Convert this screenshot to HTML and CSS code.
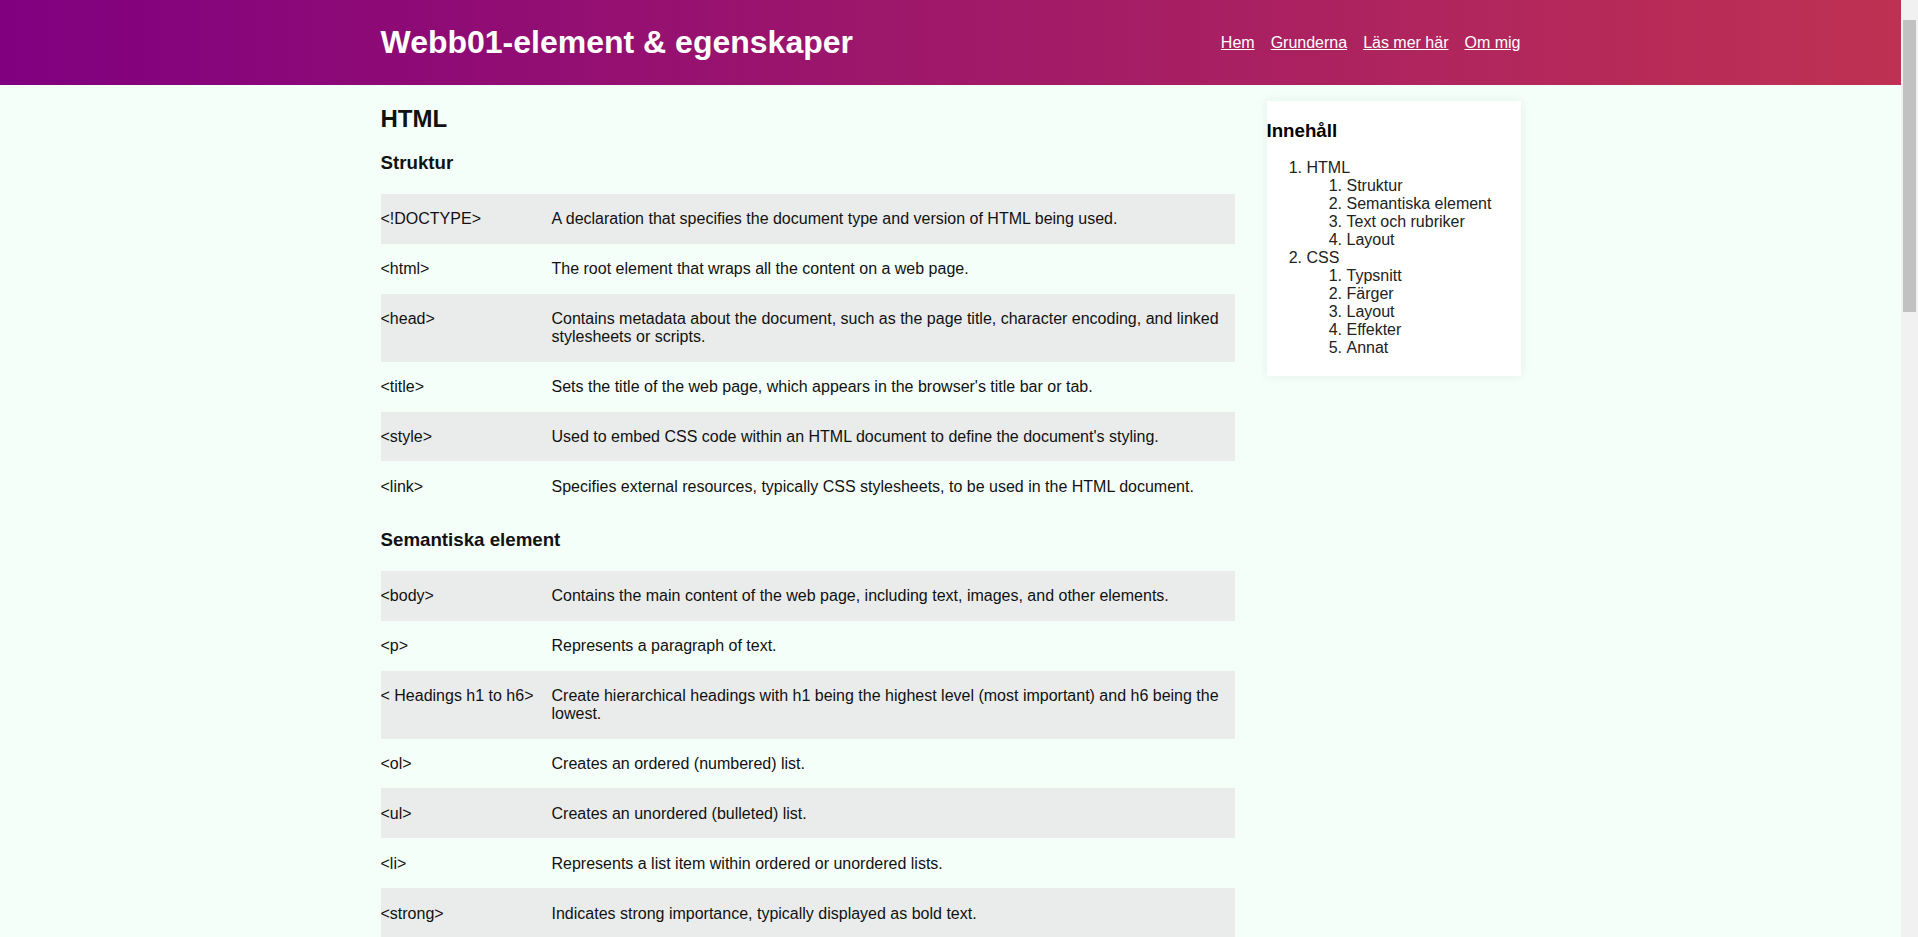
FILE: index.html
```html
<!DOCTYPE html>
<html lang="sv">
<head>
<meta charset="utf-8">
<title>Webb01-element &amp; egenskaper</title>
<link rel="stylesheet" href="styles.css">
</head>
<body>
<header class="site-header">
  <div class="container header-inner">
    <h1 class="site-title">Webb01-element &amp; egenskaper</h1>
    <nav class="site-nav">
      <a href="#">Hem</a>
      <a href="#">Grunderna</a>
      <a href="#">Läs mer här</a>
      <a href="#">Om mig</a>
    </nav>
  </div>
</header>
<div class="container layout">
  <main class="main">
    <h2>HTML</h2>
    <h3>Struktur</h3>
    <table class="elements">
      <tr><td class="tag">&lt;!DOCTYPE&gt;</td><td>A declaration that specifies the document type and version of HTML being used.</td></tr>
      <tr><td class="tag">&lt;html&gt;</td><td>The root element that wraps all the content on a web page.</td></tr>
      <tr><td class="tag">&lt;head&gt;</td><td>Contains metadata about the document, such as the page title, character encoding, and linked stylesheets or scripts.</td></tr>
      <tr><td class="tag">&lt;title&gt;</td><td>Sets the title of the web page, which appears in the browser's title bar or tab.</td></tr>
      <tr><td class="tag">&lt;style&gt;</td><td>Used to embed CSS code within an HTML document to define the document's styling.</td></tr>
      <tr><td class="tag">&lt;link&gt;</td><td>Specifies external resources, typically CSS stylesheets, to be used in the HTML document.</td></tr>
    </table>
    <h3 class="section-title">Semantiska element</h3>
    <table class="elements">
      <tr><td class="tag">&lt;body&gt;</td><td>Contains the main content of the web page, including text, images, and other elements.</td></tr>
      <tr><td class="tag">&lt;p&gt;</td><td>Represents a paragraph of text.</td></tr>
      <tr><td class="tag">&lt; Headings h1 to h6&gt;</td><td>Create hierarchical headings with h1 being the highest level (most important) and h6 being the lowest.</td></tr>
      <tr><td class="tag">&lt;ol&gt;</td><td>Creates an ordered (numbered) list.</td></tr>
      <tr><td class="tag">&lt;ul&gt;</td><td>Creates an unordered (bulleted) list.</td></tr>
      <tr><td class="tag">&lt;li&gt;</td><td>Represents a list item within ordered or unordered lists.</td></tr>
      <tr><td class="tag">&lt;strong&gt;</td><td>Indicates strong importance, typically displayed as bold text.</td></tr>
      <tr><td class="tag">&lt;em&gt;</td><td>Emphasizes text, typically displayed as italic text.</td></tr>
      <tr><td class="tag">&lt;a&gt;</td><td>Creates a hyperlink to another web page or resource.</td></tr>
      <tr><td class="tag">&lt;img&gt;</td><td>Embeds an image in the web page.</td></tr>
    </table>
  </main>
  <aside class="sidebar">
    <h3>Innehåll</h3>
    <ol>
      <li>HTML
        <ol>
          <li>Struktur</li>
          <li>Semantiska element</li>
          <li>Text och rubriker</li>
          <li>Layout</li>
        </ol>
      </li>
      <li>CSS
        <ol>
          <li>Typsnitt</li>
          <li>Färger</li>
          <li>Layout</li>
          <li>Effekter</li>
          <li>Annat</li>
        </ol>
      </li>
    </ol>
  </aside>
</div>
<div class="scroll-track" aria-hidden="true"><div class="scroll-thumb"></div></div>
</body>
</html>
```
FILE: styles.css
```css
html {
  background: #f1f1f1;
}

body {
  margin: 0 17px 0 0;
  min-height: 100vh;
  background: #f5fffa;
  color: #111;
  font-family: "Liberation Sans", Arial, sans-serif;
  font-size: 16px;
  line-height: 1.125;
}

.container {
  max-width: 1140px;
  margin: 0 auto;
}

.site-header {
  background: linear-gradient(to right, #800080, #bf3152);
  height: 85px;
}

.header-inner {
  height: 100%;
  display: flex;
  align-items: center;
  justify-content: space-between;
}

.site-title {
  margin: 0;
  color: #fff;
  font-size: 32px;
  line-height: 1.15;
  font-weight: bold;
}

.site-nav {
  display: flex;
  gap: 16px;
}

.site-nav a {
  color: #fff;
  text-decoration: underline;
}

.layout {
  display: grid;
  grid-template-columns: 854px 254px;
  column-gap: 32px;
  align-items: start;
}

.main h2 {
  font-size: 24px;
  margin: 20px 0;
}

.main h3 {
  font-size: 18.72px;
  margin: 18.72px 0;
}

.main h3.section-title {
  margin-top: 17.5px;
}

.elements {
  width: 100%;
  border-collapse: collapse;
  margin-top: 21px;
}

.elements td {
  padding: 16.2px 0;
  line-height: 1.1;
  vertical-align: top;
  color: #111;
}

.elements td.tag {
  width: 171px;
}

.elements tr:nth-child(odd) {
  background: #e9eceb;
}

.sidebar {
  margin-top: 16px;
  background: #fff;
  box-shadow: 0 0 10px rgba(0, 40, 20, 0.08);
  padding-bottom: 3px;
  color: #222;
}

.sidebar h3 {
  font-size: 18.72px;
  margin: 18.72px 0;
  color: #000;
}

.sidebar ol {
  margin: 16px 0;
  padding-left: 40px;
}

.sidebar ol ol {
  margin: 0;
}

.scroll-track {
  position: fixed;
  top: 0;
  right: 0;
  width: 17px;
  height: 100%;
  background: #f1f1f1;
}

.scroll-thumb {
  position: absolute;
  top: 20px;
  left: 2px;
  width: 13px;
  height: 292px;
  background: #c1c1c1;
}
```
